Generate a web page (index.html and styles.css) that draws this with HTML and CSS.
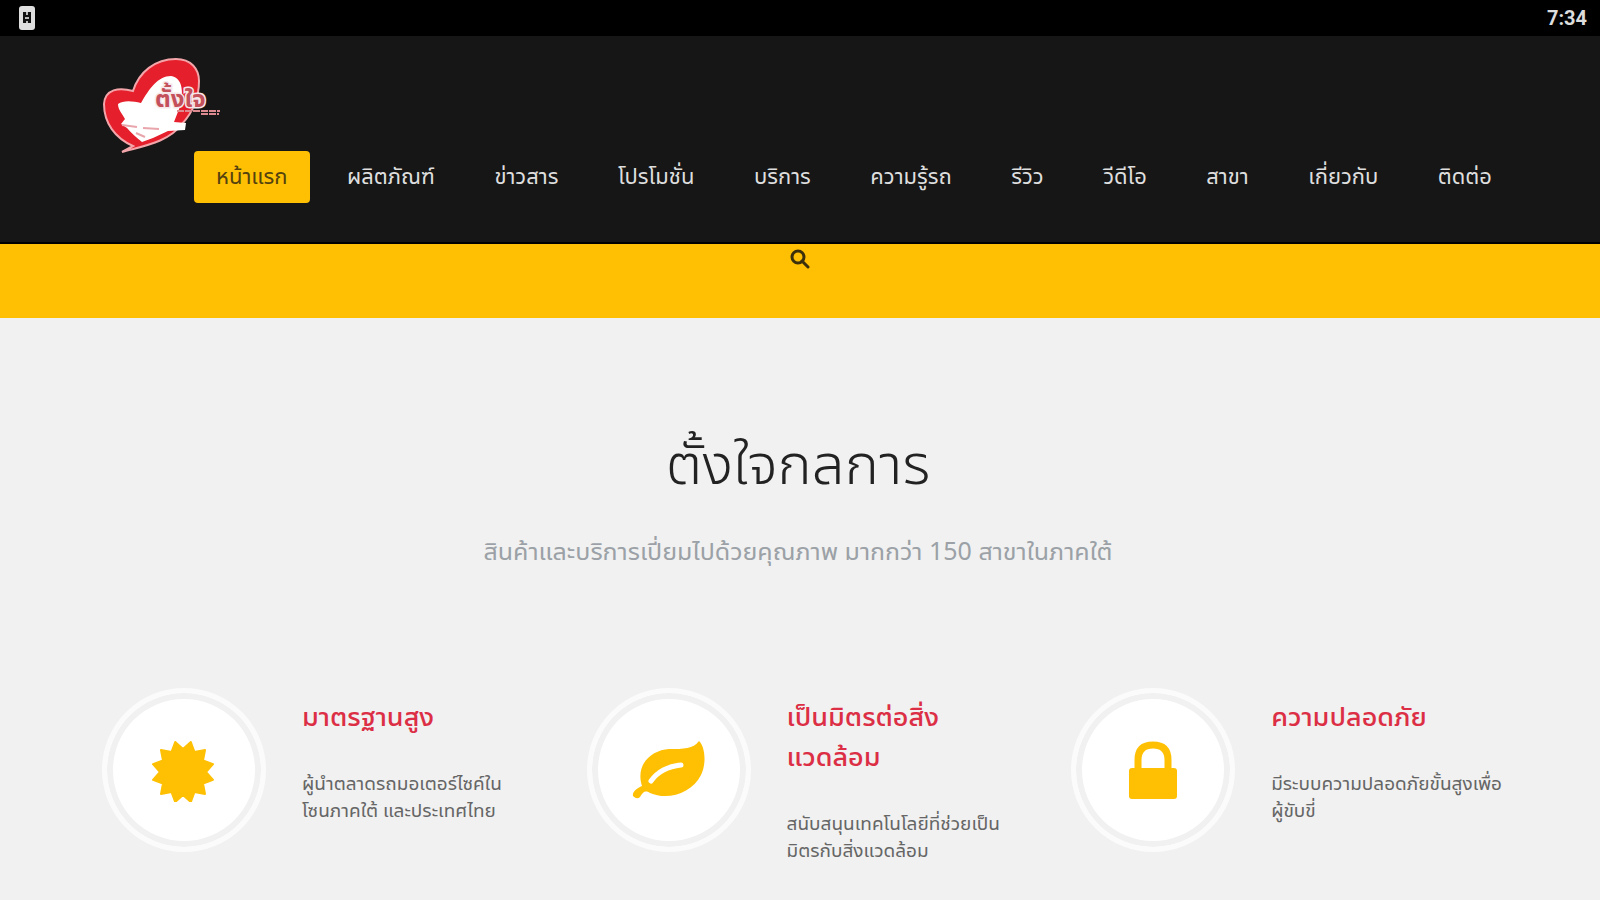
FILE: index.html
```
<!DOCTYPE html>
<html lang="th">
<head>
    <meta charset="UTF-8" />
    <meta name="viewport" content="width=device-width, initial-scale=1.0" />
    <title>ตั้งใจกลการ</title>
    <link rel="stylesheet" href="styles.css">
</head>
<body>
    <div class="status-bar">
        <svg class="status-icon" viewBox="0 0 18 26" aria-hidden="true">
            <rect x="1" y="1" width="16" height="24" rx="3" fill="#dedede" />
            <path d="M5 7h8v11H5z" fill="#111111" />
            <path d="M8 7h2v3H8zM7 12h4v2H7zM8 16h2v2H8z" fill="#bbbbbb" />
        </svg>
        <span class="clock">7:34</span>
    </div>

    <header class="site-header">
        <a class="logo" href="#" aria-label="ตั้งใจกลการ">
            <svg viewBox="0 0 120 96" aria-hidden="true">
                <path d="M19 94 L30 88 C12 80 1 65 1 46 C2 31 16 29 30 33 C36 14 52 1 73 1 C88 1 96 11 96 23 C96 40 90 54 79 66 C66 84 40 88 19 94 Z" fill="#e51f2b" stroke="#f3a5aa" stroke-width="2" />
                <path d="M15 46 C20 42 30 43 38 45 C46 31 55 18 68 18 C80 20 80 34 78 46 L71 64 L83 65 L82 72 L65 73 L50 80 L39 84 C33 79 28 75 24 70 L18 66 L22 61 C19 55 15 52 15 46 Z" fill="#ffffff" />
                <path d="M19 67 L34 69 M40 70 L56 71 M33 75 L42 79" stroke="#e9a5ac" stroke-width="2" fill="none" />
                <text class="logo-name" x="52" y="49">ตั้งใจ</text>
                <path d="M74 53 H117 M98 56 H116" stroke="#dc8990" stroke-width="2" stroke-dasharray="7 1" />
            </svg>
        </a>
        <nav class="main-nav">
            <a class="active" href="#">หน้าแรก</a>
            <a href="#">ผลิตภัณฑ์</a>
            <a href="#">ข่าวสาร</a>
            <a href="#">โปรโมชั่น</a>
            <a href="#">บริการ</a>
            <a href="#">ความรู้รถ</a>
            <a href="#">รีวิว</a>
            <a href="#">วีดีโอ</a>
            <a href="#">สาขา</a>
            <a href="#">เกี่ยวกับ</a>
            <a href="#">ติดต่อ</a>
        </nav>
    </header>

    <div class="search-bar">
        <button type="button" aria-label="ค้นหา">
            <svg viewBox="0 0 20 20" aria-hidden="true">
                <circle cx="8" cy="8" r="6" fill="none" stroke="currentColor" stroke-width="3" />
                <path d="M12 12 L18 18" stroke="currentColor" stroke-width="3" stroke-linecap="round" />
            </svg>
        </button>
    </div>

    <main class="content">
        <section class="intro">
            <h1>ตั้งใจกลการ</h1>
            <p>สินค้าและบริการเปี่ยมไปด้วยคุณภาพ มากกว่า 150 สาขาในภาคใต้</p>
        </section>

        <section class="features">
            <article class="feature">
                <div class="feature-icon">
                    <svg viewBox="1 -2 64 64" aria-hidden="true">
                        <path d="M39.8 2 L43.5 12 L54 10 L52 20.5 L62 24.2 L55 32 L62 39.8 L52 43.5 L54 54 L43.5 52 L39.8 62 L32 55 L24.2 62 L20.5 52 L10 54 L12 43.5 L2 39.8 L9 32 L2 24.2 L12 20.5 L10 10 L20.5 12 L24.2 2 L32 9 Z" fill="#ffc003" stroke="#ffc003" stroke-width="2" stroke-linejoin="round" />
                    </svg>
                </div>
                <div class="feature-text">
                    <h2>มาตรฐานสูง</h2>
                    <p>ผู้นำตลาดรถมอเตอร์ไซค์ใน<br>โซนภาคใต้ และประเทศไทย</p>
                </div>
            </article>
            <article class="feature">
                <div class="feature-icon">
                    <svg class="leaf" viewBox="0 0 74 60" aria-hidden="true">
                        <path d="M67 1 C74 8 74 25 69 35 C60 53 36 61 18 53 C13 50 11 52 8 57 Q5 60 1 56 C0 52 5 48 10 46 C3 24 20 10 37 9 C52 9 61 9 67 1 Z" fill="#ffc003" />
                        <path d="M19 41 Q29 27 49 25" fill="none" stroke="#ffffff" stroke-width="5" stroke-linecap="round" />
                    </svg>
                </div>
                <div class="feature-text">
                    <h2>เป็นมิตรต่อสิ่ง<br>แวดล้อม</h2>
                    <p>สนับสนุนเทคโนโลยีที่ช่วยเป็น<br>มิตรกับสิ่งแวดล้อม</p>
                </div>
            </article>
            <article class="feature">
                <div class="feature-icon">
                    <svg class="lock" viewBox="0 0 48 58" aria-hidden="true">
                        <path d="M9 30 V19 Q9 4 24 4 Q39 4 39 19 V30" fill="none" stroke="#ffc003" stroke-width="7" />
                        <rect y="27" width="48" height="31" rx="3" fill="#ffc003" />
                    </svg>
                </div>
                <div class="feature-text">
                    <h2>ความปลอดภัย</h2>
                    <p>มีระบบความปลอดภัยขั้นสูงเพื่อ<br>ผู้ขับขี่</p>
                </div>
            </article>
        </section>
    </main>
</body>
</html>
```
FILE: styles.css
```
* {
    margin: 0;
    padding: 0;
    box-sizing: border-box;
}

body {
    font-family: "Noto Sans Thai UI", "Noto Sans Thai", Roboto, sans-serif;
    background: #f1f1f1;
    color: #222222;
}

.status-bar {
    display: flex;
    align-items: center;
    justify-content: space-between;
    height: 36px;
    padding: 0 13px 0 18px;
    background: #000000;
    color: #dddddd;
}

.status-icon {
    width: 18px;
    height: 26px;
}

.clock {
    font-family: Roboto, sans-serif;
    font-size: 20px;
    font-weight: 700;
    line-height: 36px;
}

.site-header {
    height: 208px;
    padding: 22px 86px 0 103px;
    background: #161616;
    border-bottom: 2px solid #000000;
}

.logo {
    display: block;
    width: 120px;
    height: 93px;
}

.logo svg {
    display: block;
    width: 120px;
    height: 96px;
}

.logo-name {
    fill: #c4505c;
    stroke: #f6e8ea;
    stroke-width: 3px;
    paint-order: stroke;
    font-size: 24px;
    font-weight: 700;
}

.main-nav {
    display: flex;
    justify-content: space-between;
    margin-left: 91px;
}

.main-nav a {
    padding: 0 22px 4px;
    border-radius: 4px;
    color: #dedede;
    font-size: 22px;
    line-height: 48px;
    text-decoration: none;
    white-space: nowrap;
}

.main-nav .active {
    background: #ffc003;
    color: #54420f;
}

.search-bar {
    height: 74px;
    padding-top: 5px;
    background: #ffc003;
    text-align: center;
}

.search-bar button {
    border: none;
    background: none;
    color: #3b300b;
    cursor: pointer;
}

.search-bar svg {
    display: block;
    width: 20px;
    height: 20px;
}

.content {
    padding: 98px 98px 40px 102px;
}

.intro {
    padding-right: 8px;
    text-align: center;
}

.intro h1 {
    font-size: 58px;
    font-weight: 300;
    line-height: 92px;
}

.intro p {
    margin-top: 20px;
    color: #9ba1a6;
    font-size: 25px;
    line-height: 44px;
}

.features {
    display: grid;
    grid-template-columns: repeat(3, 1fr);
    gap: 55px;
    margin-top: 116px;
}

.feature {
    display: flex;
    align-items: flex-start;
    gap: 36px;
}

.feature-icon {
    display: flex;
    flex: none;
    align-items: center;
    justify-content: center;
    width: 164px;
    height: 164px;
    border: 5px solid #fbfbfb;
    border-radius: 50%;
    background: #ffffff;
    box-shadow: inset 0 0 0 6px #f1f1f1;
}

.feature-icon svg {
    width: 64px;
    height: 64px;
}

.feature-icon .leaf {
    width: 74px;
    height: 60px;
}

.feature-icon .lock {
    width: 48px;
    height: 58px;
}

.feature-text {
    padding-top: 8px;
    white-space: nowrap;
}

.feature-text h2 {
    color: #dc2f45;
    font-size: 27px;
    font-weight: 500;
    line-height: 40px;
}

.feature-text p {
    margin-top: 34px;
    color: #666666;
    font-size: 19px;
    line-height: 27px;
}

@media (max-width: 1300px) {
    .site-header {
        height: auto;
        padding-bottom: 24px;
    }

    .main-nav {
        flex-wrap: wrap;
    }

    .features {
        grid-template-columns: 1fr;
    }
}
```
